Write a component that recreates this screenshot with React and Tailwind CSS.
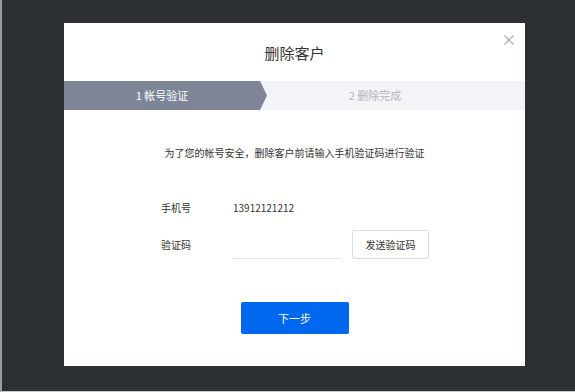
import React from 'react';

const App = () => {
    return (
        <div className="w-[575px] h-[392px] bg-[#2c3034] border-l-2 border-l-[#9a9c9e] border-b border-b-[#c8c9ca] flex flex-col items-start pt-[23px] pl-[62px] font-['Noto_Sans_CJK_SC','Noto_Sans',sans-serif]">
            {/* Modal */}
            <div className="relative w-[461px] h-[343px] bg-white flex flex-col">
                <button className="absolute right-[11px] top-[12px] text-[#a4a7ad]">
                    <svg width="10" height="10" viewBox="0 0 10 10" fill="none" stroke="currentColor" strokeWidth="1.2">
                        <path d="M0.5 0.5 L9.5 9.5 M9.5 0.5 L0.5 9.5" />
                    </svg>
                </button>

                <div className="h-[58px] flex items-center justify-center pt-[1px]">
                    <h1 className="text-[15px] text-[#333] leading-none">删除客户</h1>
                </div>

                {/* Steps */}
                <div className="h-[29px] bg-[#f3f4f8] flex">
                    <div className="w-[203px] h-full bg-[#7e8596] flex items-center [clip-path:polygon(0_0,196px_0,203px_50%,196px_100%,0_100%)]">
                        <span className="w-[196px] text-center text-white text-[11px]">1 帐号验证</span>
                    </div>
                    <div className="flex-1 flex items-center justify-center pr-[42px]">
                        <span className="text-[#b3b6bd] text-[11px]">2 删除完成</span>
                    </div>
                </div>

                {/* Body */}
                <p className="mt-[36px] text-center text-[10px] text-[#333] leading-[14px]">
                    为了您的帐号安全，删除客户前请输入手机验证码进行验证
                </p>

                <div className="mt-[40px] pl-[97px] flex flex-col">
                    <div className="flex items-center h-[14px]">
                        <span className="w-[72px] text-[10px] text-[#333]">手机号</span>
                        <span className="text-[10px] text-[#333]">13912121212</span>
                    </div>
                    <div className="flex items-end mt-[16px]">
                        <span className="w-[72px] text-[10px] text-[#333] pb-[7px]">验证码</span>
                        <input className="w-[109px] h-[28px] border-b border-[#dfe2ec] outline-none text-[10px]" />
                        <button className="ml-[10px] w-[77px] h-[29px] border border-[#dcdfe6] rounded-[2px] text-[10px] text-[#333] bg-white">
                            发送验证码
                        </button>
                    </div>
                </div>

                <div className="mt-[43px] flex justify-center">
                    <button className="w-[108px] h-[32px] bg-[#0068ee] rounded-[2px] text-white text-[11px]">
                        下一步
                    </button>
                </div>
            </div>
        </div>
    );
};

export default App;
